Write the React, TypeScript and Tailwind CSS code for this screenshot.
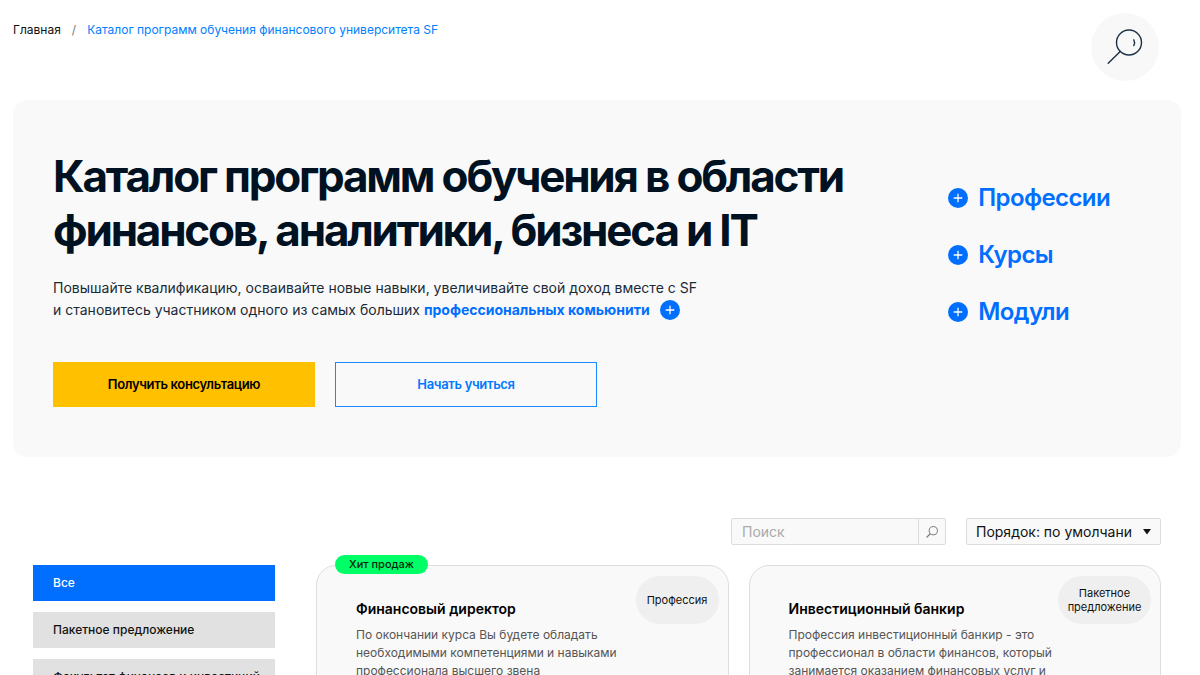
import type { ReactNode } from "react";

const sections = ["Профессии", "Курсы", "Модули"];

const filters = ["Все", "Пакетное предложение", "Факультет финансов и инвестиций"];

const programs = [
  {
    title: "Финансовый директор",
    text: "По окончании курса Вы будете обладать необходимыми компетенциями и навыками профессионала высшего звена",
    kind: "Профессия",
    kindWidth: "w-[83px]",
    hit: true,
  },
  {
    title: "Инвестиционный банкир",
    text: "Профессия инвестиционный банкир - это профессионал в области финансов, который занимается оказанием финансовых услуг и",
    kind: "Пакетное предложение",
    kindWidth: "w-[93px]",
    hit: false,
  },
];

function PlusIcon() {
  return (
    <svg className="size-5 shrink-0" viewBox="0 0 20 20" aria-hidden="true">
      <circle cx="10" cy="10" r="10" fill="#006fff" />
      <path d="M10 5.7v8.6M5.7 10h8.6" stroke="#fff" strokeWidth="1.3" />
    </svg>
  );
}

function Lens() {
  return (
    <svg
      className="size-9"
      viewBox="0 0 36 36"
      fill="none"
      stroke="#1c3144"
      strokeWidth="1.4"
      strokeLinecap="round"
      aria-hidden="true"
    >
      <circle cx="22" cy="13.5" r="12.5" />
      <path d="M13.2 22.4 1.2 34.3" />
      <path d="M26.8 10.8q1.6 2.9 0 5.8" />
    </svg>
  );
}

function Badge({ children, width }: { children: ReactNode; width: string }) {
  return (
    <span
      className={`absolute right-[9px] top-[10px] flex h-12 items-center justify-center rounded-full bg-[#efefef] text-center text-[11px] leading-[14px] text-[#111] ${width}`}
    >
      {children}
    </span>
  );
}

function ProgramCard({ title, text, kind, kindWidth, hit }: (typeof programs)[number]) {
  return (
    <article className="relative min-h-[240px] rounded-[20px] border border-[#dedede] bg-[#f9f9f9] pl-[39px] pr-[100px] pt-8">
      {hit && (
        <span className="absolute -top-[11px] left-[18px] flex h-[19px] w-[93px] items-center justify-center rounded-full bg-[#00ff66] text-[11px] font-medium text-[#06250f]">
          Хит продаж
        </span>
      )}
      <Badge width={kindWidth}>{kind}</Badge>
      <h2 className="whitespace-nowrap text-sm font-semibold leading-[22px] text-black">{title}</h2>
      <p className="mt-[6px] text-xs leading-[18px] text-[#555]">{text}</p>
    </article>
  );
}

export default function App() {
  return (
    <div className="h-screen overflow-hidden bg-white font-['Inter',sans-serif] text-[#001122]">
      <header className="flex items-start justify-between pl-[13px] pr-[41px] pt-[13px]">
        <nav className="mt-2 flex gap-[11px] text-xs leading-[18px]" aria-label="Навигация">
          <a href="#" className="text-[#111]">
            Главная
          </a>
          <span className="text-[#777]">/</span>
          <a href="#" className="text-[#0080ff]">
            Каталог программ обучения финансового университета SF
          </a>
        </nav>
        <button
          type="button"
          aria-label="Поиск по сайту"
          className="flex size-[68px] items-center justify-center rounded-full bg-[#f8f8f8]"
        >
          <Lens />
        </button>
      </header>

      <main>
        <section className="ml-[13px] mr-[19px] mt-[19px] flex justify-between rounded-[14px] bg-[#f9f9f9] pb-[50px] pl-10 pr-[71px] pt-[49px]">
          <div>
            <h1 className="text-[44px] font-bold leading-[54px] tracking-tighter">
              Каталог программ обучения в области
              <br />
              финансов, аналитики, бизнеса и IT
            </h1>
            <p className="mt-5 text-sm leading-[22px] text-[#1a2a38]">
              Повышайте квалификацию, осваивайте новые навыки, увеличивайте свой доход вместе с SF
              <br />
              <span className="flex items-center">
                и становитесь участником одного из самых больших&nbsp;
                <a href="#" className="flex items-center gap-[10px] font-bold text-[#006fff]">
                  профессиональных комьюнити
                  <PlusIcon />
                </a>
              </span>
            </p>
            <div className="mt-[41px] flex gap-5">
              <button
                type="button"
                className="h-[45px] w-[262px] bg-[#ffc000] text-[13px] font-semibold tracking-tight text-black"
              >
                Получить консультацию
              </button>
              <button
                type="button"
                className="h-[45px] w-[262px] border border-[#1a88ff] text-[13px] font-semibold tracking-tight text-[#0078ff]"
              >
                Начать учиться
              </button>
            </div>
          </div>
          <ul className="flex flex-col gap-[21px] pt-[31px]">
            {sections.map((s) => (
              <li key={s}>
                <a
                  href="#"
                  className="flex items-center gap-[10px] text-2xl font-semibold leading-9 tracking-tight text-[#006fff]"
                >
                  <PlusIcon />
                  {s}
                </a>
              </li>
            ))}
          </ul>
        </section>

        <section className="mt-[61px] pl-[33px] pr-[39px]">
          <div className="flex justify-end gap-5">
            <form
              className="flex h-[27px] w-[215px] rounded-[2px] border border-[#dcdcdc] bg-[#f9f9f9]"
              onSubmit={(e) => e.preventDefault()}
            >
              <input
                type="text"
                aria-label="Поиск"
                placeholder="Поиск"
                className="min-w-0 flex-1 px-[10px] text-sm outline-none placeholder:text-[#aaa]"
              />
              <button
                type="submit"
                aria-label="Найти"
                className="flex w-[27px] items-center justify-center border-l border-[#dcdcdc]"
              >
                <svg className="size-3" viewBox="0 0 12 12" fill="none" stroke="#777" aria-hidden="true">
                  <circle cx="7.3" cy="4.7" r="4.1" />
                  <path d="M4.3 7.7.6 11.4" strokeWidth="1.3" />
                </svg>
              </button>
            </form>
            <div className="relative">
              <select
                aria-label="Порядок"
                className="h-[27px] w-[195px] appearance-none rounded-[2px] border border-[#dcdcdc] bg-[#f9f9f9] pl-[9px] pr-[28px] text-sm text-[#111]"
              >
                <option>Порядок: по умолчанию</option>
              </select>
              <svg
                className="pointer-events-none absolute right-[10px] top-[11px] h-[6px] w-2"
                viewBox="0 0 8 6"
                aria-hidden="true"
              >
                <path d="M0 0h8L4 5.5z" fill="#111" />
              </svg>
            </div>
          </div>

          <div className="mt-5 flex items-start gap-[41px]">
            <aside className="flex w-[242px] shrink-0 flex-col gap-[11px]">
              {filters.map((f, i) => (
                <button
                  key={f}
                  type="button"
                  className={`h-9 overflow-hidden whitespace-nowrap px-5 text-left text-xs font-medium ${
                    i === 0 ? "bg-[#006fff] text-white" : "bg-[#e1e1e1] text-[#111]"
                  }`}
                >
                  {f}
                </button>
              ))}
            </aside>
            <div className="grid flex-1 grid-cols-2 gap-5">
              {programs.map((p) => (
                <ProgramCard key={p.title} {...p} />
              ))}
            </div>
          </div>
        </section>
      </main>
    </div>
  );
}
